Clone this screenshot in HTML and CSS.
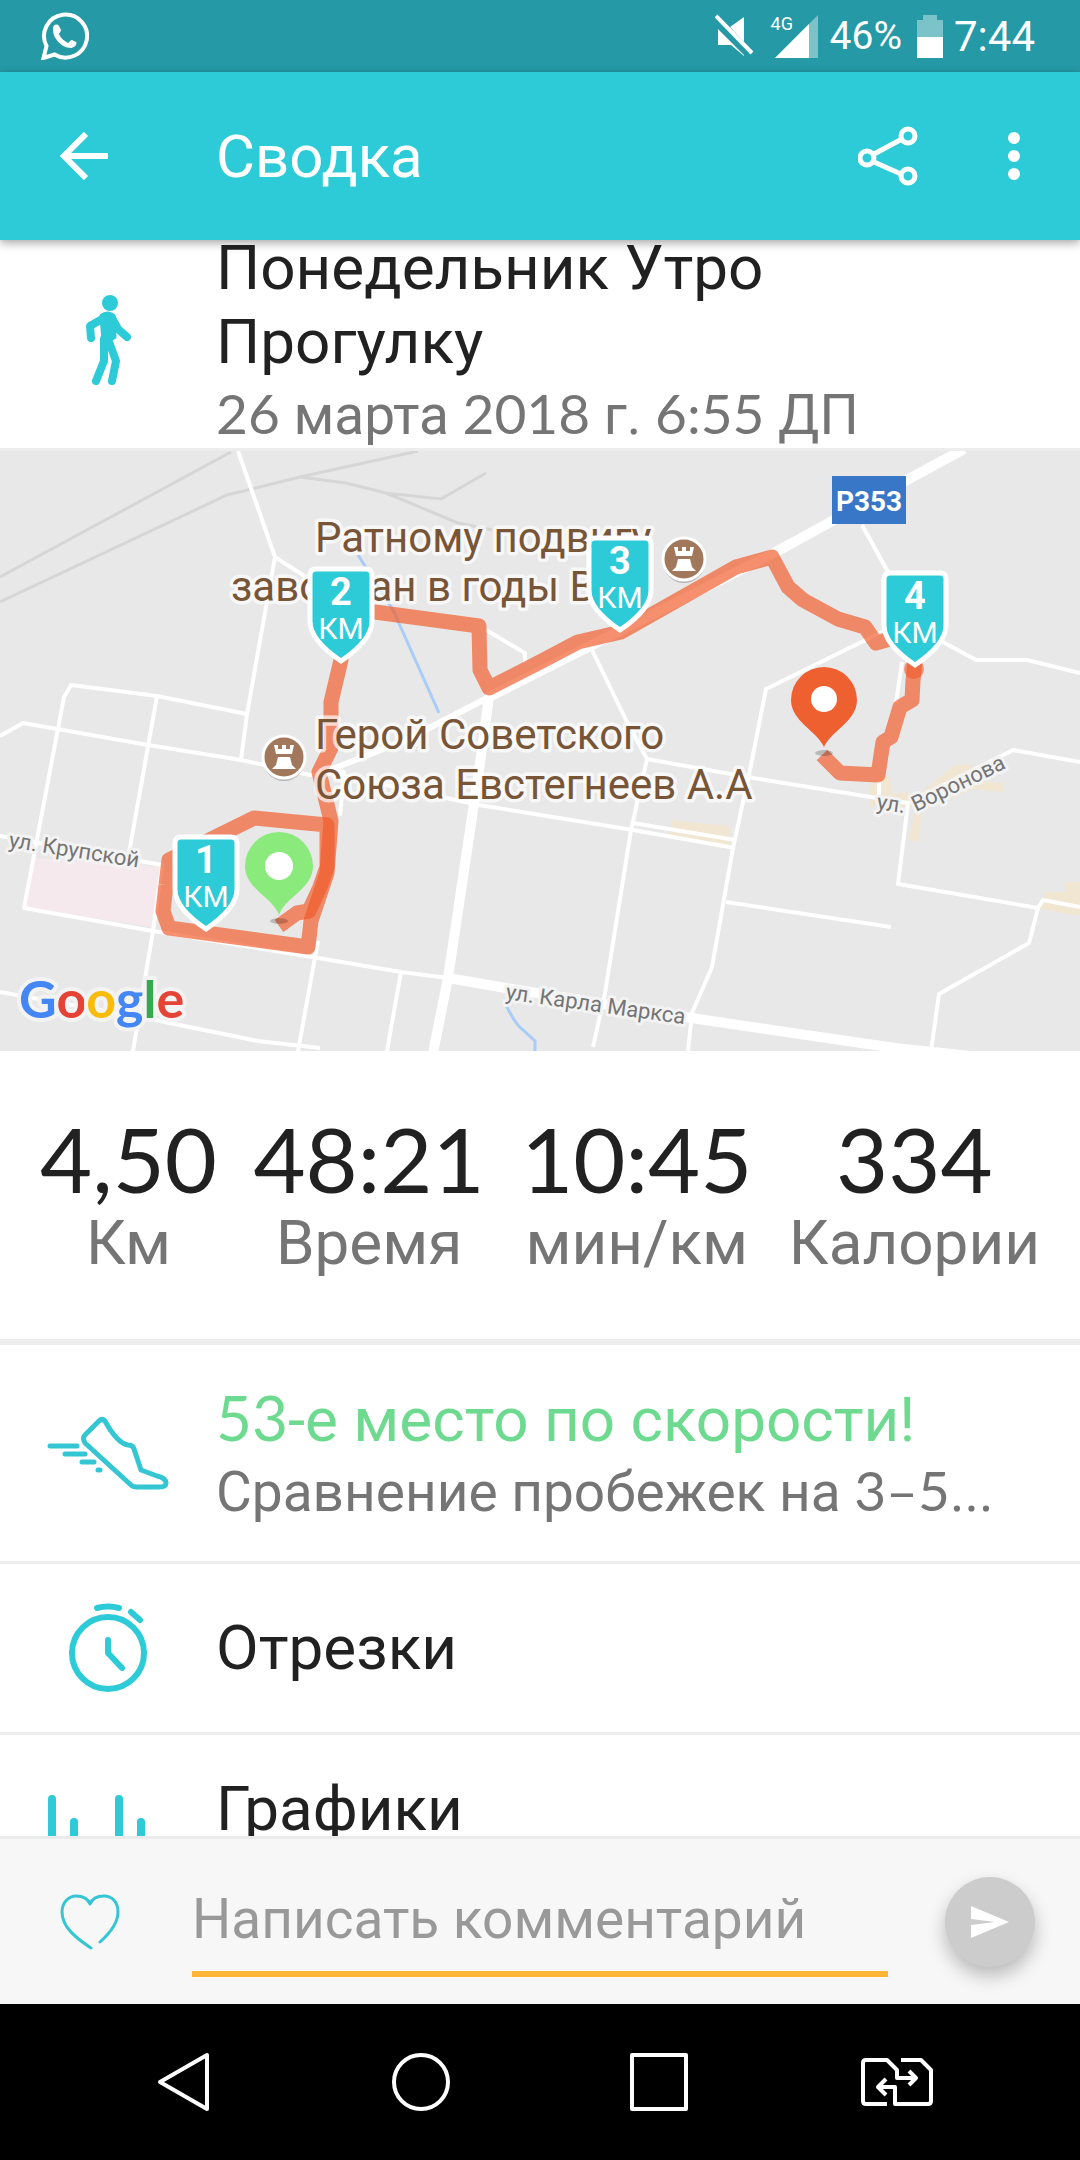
FILE: index.html
```html
<!DOCTYPE html>
<html lang="ru">
<head>
    <meta charset="UTF-8">
    <meta name="viewport" content="width=device-width, initial-scale=1.0">
    <title>Сводка</title>
    <link rel="stylesheet" href="styles.css">
</head>
<body>

<div class="status-bar">
    <svg class="status-chat" width="48" height="48" viewBox="0 0 48 48">
        <path d="M2.500 46 L5.500 34 A21.500 21.500 0 1 1 13.500 42.500 Z" fill="none" stroke="#fff" stroke-width="4"/>
        <path d="M12 16 C12 13 16 11 18 14 L20 18 C20 20 18 21 18 22 C20 27 24 29 27 31 C28 31 29 28 31 28 L35 30 C37 32 33 36 30 36 C20 36 11 25 12 16 Z" fill="#fff"/>
    </svg>
    <svg width="40" height="44" viewBox="0 0 40 44">
        <path d="M3 15 L17 29 L29 41 L29 42 L16 31 L3 31 Z M15 13 L29 3 V28 Z" fill="#fff"/>
        <path d="M1 2 L37 39" stroke="#fff" stroke-width="4"/>
    </svg>
    <div class="signal">
        <span class="signal-type">4G</span>
        <svg width="43" height="43" viewBox="0 0 43 43">
            <path d="M0 43 L43 0 V43 Z" fill="#7cc2c9"/>
            <path d="M0 43 L34 9 V43 Z" fill="#fff"/>
        </svg>
    </div>
    <span class="battery-level">46%</span>
    <svg class="battery" width="26" height="43" viewBox="0 0 26 43">
        <path d="M0 5 H6 V0 H20 V5 H26 V23 H0 Z" fill="#7cc2c9"/>
        <path d="M0 22 H26 V43 H0 Z" fill="#fff"/>
    </svg>
    <span class="clock">7:44</span>
</div>

<header class="app-bar">
    <button class="icon-button" aria-label="Назад">
        <svg width="48" height="48" viewBox="0 0 48 48">
            <path d="M26 2 L4 24 L26 46 M4 24 H48" fill="none" stroke="#fff" stroke-width="6"/>
        </svg>
    </button>
    <h1>Сводка</h1>
    <button class="icon-button" aria-label="Поделиться">
        <svg width="60" height="60" viewBox="0 0 60 60">
            <path d="M16 28 L44 13 M16 36 L43 48" stroke="#fff" stroke-width="5"/>
            <g fill="none" stroke="#fff" stroke-width="5">
                <circle cx="9" cy="32" r="7"/>
                <circle cx="50" cy="10" r="7"/>
                <circle cx="50" cy="50" r="7"/>
            </g>
        </svg>
    </button>
    <button class="icon-button" aria-label="Ещё">
        <svg width="12" height="48" viewBox="0 0 12 48" fill="#fff">
            <circle cx="6" cy="6" r="6"/>
            <circle cx="6" cy="24" r="6"/>
            <circle cx="6" cy="42" r="6"/>
        </svg>
    </button>
</header>

<main>
    <section class="row activity">
        <div class="row-icon">
            <svg width="46" height="90" viewBox="0 0 46 90" fill="none" stroke="#2dcad7" stroke-linecap="round" stroke-linejoin="round">
                <circle cx="25" cy="8" r="8" fill="#2dcad7" stroke="none"/>
                <path d="M17 21 Q22 17 28 21 L29 42 L19 46 Z" fill="#2dcad7" stroke-width="5"/>
                <path d="M19 23 L5 31 L6 43 M27 23 L33 34 L42 42" stroke-width="8"/>
                <path d="M19 44 L19 66 L11 86 M23 44 L31 66 L27 86" stroke-width="8"/>
            </svg>
        </div>
        <div class="row-text">
            <h2>Понедельник Утро Прогулку</h2>
            <p><span class="num">26</span> марта <span class="num">2018</span> г. <span class="num">6:55</span> ДП</p>
        </div>
    </section>

    <svg class="map" viewBox="0 0 1080 600" role="img" aria-label="Маршрут">
        <defs>
            <path id="shield" d="M-25 -92 H25 Q31 -92 31 -86 V-40 C31 -22 12 -8 0 0 C-12 -8 -31 -22 -31 -40 V-86 Q-31 -92 -25 -92 Z"/>
            <g id="castle">
                <circle cy="3" r="21" fill="#b5b5b5"/>
                <circle r="21" fill="#a1785c" stroke="#fff" stroke-width="3"/>
                <path d="M-10 -12 H-6 V-8 H-2 V-12 H2 V-8 H6 V-12 H10 L8 -3 H-8 Z M-6 0 H6 L8 8 L12 12 H-12 L-8 8 Z" fill="#fff"/>
            </g>
        </defs>
        <rect width="1080" height="600" fill="#e8e8e8"/>

        <!-- districts -->
        <path d="M35 407 L162 416 L152 476 L26 456 Z" fill="#f6e9ee"/>
        <g fill="#f1e6d2">
            <path d="M672 369 L729 375 V396 L669 386 Z"/>
            <path d="M870 335 L882 326 L890 326 L892 342 L910 342 L912 356 L870 356 Z"/>
            <path d="M920 342 L955 314 H972 V329 L1004 332 V341 L972 338 L922 361 L919 391 L908 389 Z"/>
            <path d="M1045 441 H1065 V431 H1080 V465 L1040 458 Z"/>
        </g>

        <!-- railways -->
        <g fill="none" stroke="#d6d6d6" stroke-width="3">
            <path d="M0 126 L231 1 M0 151 L227 44 L300 26 L418 0"/>
            <path d="M300 26 L346 32 L386 42 L441 48 L486 22 M386 42 L458 72 L492 79"/>
        </g>

        <!-- streets -->
        <g fill="none" stroke="#fff" stroke-width="4" stroke-linejoin="round">
            <path d="M238 0 L275 106 L312 130 M275 106 L266 156 L247 263 L241 309"/>
            <path d="M0 285 L23 272 L148 294 L241 309 L310 324 L345 321"/>
            <path d="M247 263 L157 245 L71 234 L64 246 L24 457 L153 480 L312 506 L401 521 L448 527"/>
            <path d="M157 245 L129 402 M0 385 L162 414 L153 480 L133 600"/>
            <path d="M0 541 L155 569 L258 590 L320 597"/>
            <path d="M318 490 L298 600 M401 521 L387 600"/>
            <path d="M486 179 L525 202 V212"/>
            <path d="M330 319 L406 289 L489 246" stroke-width="6"/>
            <path d="M330 319 L344 321 L340 365 M340 324 L479 354 L633 379 L735 397 M633 372 L735 389"/>
            <path d="M592 199 L626 269 L647 308 L631 379 L605 542 L593 596"/>
            <path d="M647 308 L747 326 L908 352"/>
            <path d="M890 177 L766 238 L750 319 L733 397 L712 516 L692 562 L688 600"/>
            <path d="M862 74 L888 121 M943 191 L976 209 H1027 L1080 222"/>
            <path d="M902 211 L896 252 M879 330 V346"/>
            <path d="M1080 311 L1013 299 L908 352 L898 433 L1038 457 L1043 449 L1080 456"/>
            <path d="M1038 457 L1029 492 L939 543 L931 600 M726 451 L891 476"/>
        </g>
        <g fill="none" stroke="#fff" stroke-width="10" stroke-linejoin="round">
            <path d="M964 -2 L907 29 L774 102 L592 194 L489 246 L479 319 L448 527 L433 602"/>
            <path d="M448 527 L506 537 L691 567 L895 597 L970 605"/>
        </g>
        <g fill="none" stroke="#a9ccf8" stroke-width="3">
            <path d="M358 104 L393 159 L439 262"/>
            <path d="M506 554 Q515 573 523 579 L535 590 V600"/>
        </g>

        <!-- route -->
        <g class="route">
            <path d="M279 475 L297 462 L309 460 L320 436 L327 416 L327 374 L254 367 L169 409 L166 434"/>
            <path d="M166 434 L163 460 L169 477 L308 496 L311 470 L327 422 L331 370 L319 321 L331 297 L331 251 L341 209 L341 160 L375 161 L479 175 L480 219 L489 237 L540 211 L578 191 L621 181 L736 116 L772 106 L788 136 L803 149 L838 168 L865 176 L876 192 L900 185"/>
            <path d="M915 210 L913 230 L912 249 L900 256 L891 286 L883 291 L878 324 L840 322 L822 304"/>
        </g>
        <circle cx="914" cy="218" r="10" fill="#f05a28" opacity="0.6"/>

        <!-- places -->
        <g class="place">
            <text x="315" y="101">Ратному подвигу</text>
            <text x="231" y="150">заводчан в годы В</text>
            <text x="315" y="298">Герой Советского</text>
            <text x="315" y="348">Союза Евстегнеев А.А</text>
        </g>
        <g class="street">
            <text transform="translate(8 396) rotate(9)">ул. Крупской</text>
            <text transform="translate(505 548) rotate(8)">ул. Карла Маркса</text>
            <text transform="translate(876 358) rotate(8)">ул.</text>
            <text transform="translate(916 361) rotate(-26)">Воронова</text>
        </g>
        <use href="#castle" x="284" y="306"/>
        <use href="#castle" x="684" y="108"/>
        <rect x="832" y="25" width="74" height="48" fill="#3876c8"/>
        <text class="road-number" x="869" y="60">P353</text>

        <!-- start and finish pins -->
        <ellipse cx="279" cy="470" rx="9" ry="3" fill="#000" opacity="0.2"/>
        <path d="M279 464 C273 446 245 438 245 415 A34 34 0 0 1 313 415 C313 438 285 446 279 464 Z" fill="#8aea7b"/>
        <circle cx="279" cy="415" r="14" fill="#fff"/>
        <ellipse cx="824" cy="302" rx="9" ry="3" fill="#000" opacity="0.2"/>
        <path d="M824 296 C817 280 791 270 791 249 A33 33 0 0 1 857 249 C857 270 831 280 824 296 Z" fill="#ef6030"/>
        <circle cx="824" cy="248" r="13" fill="#fff"/>

        <!-- kilometre marks -->
        <g class="km" transform="translate(206 478)">
            <use href="#shield"/>
            <text class="km-number" y="-56">1</text>
            <text y="-22">КМ</text>
        </g>
        <g class="km" transform="translate(341 210)">
            <use href="#shield"/>
            <text class="km-number" y="-56">2</text>
            <text y="-22">КМ</text>
        </g>
        <g class="km" transform="translate(620 179)">
            <use href="#shield"/>
            <text class="km-number" y="-56">3</text>
            <text y="-22">КМ</text>
        </g>
        <g class="km" transform="translate(915 214)">
            <use href="#shield"/>
            <text class="km-number" y="-56">4</text>
            <text y="-22">КМ</text>
        </g>

        <text class="google" x="19" y="567"><tspan fill="#4486f4">G</tspan><tspan fill="#e54335">o</tspan><tspan fill="#fabc0b">o</tspan><tspan fill="#4486f4">g</tspan><tspan fill="#36a852">l</tspan><tspan fill="#e54335">e</tspan></text>
    </svg>

    <dl class="stats">
        <div class="stat"><dd>4,50</dd><dt>Км</dt></div>
        <div class="stat"><dd>48:21</dd><dt>Время</dt></div>
        <div class="stat"><dd>10:45</dd><dt>мин/км</dt></div>
        <div class="stat"><dd>334</dd><dt>Калории</dt></div>
    </dl>

    <a href="#" class="row">
        <div class="row-icon">
            <svg width="122" height="74" viewBox="0 0 122 74" fill="none" stroke="#35c6d4" stroke-width="5" stroke-linecap="round" stroke-linejoin="round">
                <path d="M58 5 Q55 2 52 5 L38 19 Q35 22 38 27 L84 69 Q86 71 90 71 H112 Q119 71 119 67 Q119 62 110 60 L94 54 L87 33 Q86 29 81 29 Q70 27 58 5 Z"/>
                <path d="M3 30 H30 M18 38 H38 M35 46 H47 M51 54 H53"/>
            </svg>
        </div>
        <div class="row-text">
            <h3 class="record"><span class="num">53</span>-е место по скорости!</h3>
            <p>Сравнение пробежек на <span class="num">3–5</span>...</p>
        </div>
    </a>

    <a href="#" class="row row-short">
        <div class="row-icon">
            <svg width="78" height="90" viewBox="0 0 78 90" fill="none" stroke="#2dcad7" stroke-width="6" stroke-linecap="round">
                <circle cx="39" cy="50" r="36"/>
                <path d="M28 5 Q39 2 50 5 M62 9 L71 17"/>
                <path d="M39 37 V50 L53 65" stroke-linejoin="round"/>
            </svg>
        </div>
        <div class="row-text">
            <h3>Отрезки</h3>
        </div>
    </a>

    <a href="#" class="row row-top">
        <div class="row-icon">
            <svg width="120" height="96" viewBox="0 0 120 96" stroke="#2dcad7" stroke-width="8" stroke-linecap="round">
                <path d="M4 4 V92 M26 27 V92 M49 60 V92 M71 4 V92 M93 27 V92 M116 60 V92"/>
            </svg>
        </div>
        <div class="row-text">
            <h3>Графики</h3>
        </div>
    </a>
</main>

<form class="comment-bar">
    <button type="button" class="icon-button" aria-label="Нравится">
        <svg width="60" height="56" viewBox="0 0 60 56" fill="none" stroke="#35c6d4" stroke-width="3" stroke-linecap="round" stroke-linejoin="round">
            <path d="M31 54 C16 44 2 33 2 18 C2 8 9 2 16 2 C23 2 28 5 30 10 C32 5 37 2 44 2 C52 2 58 8 58 18 C58 30 49 40 40 48"/>
        </svg>
    </button>
    <input type="text" placeholder="Написать комментарий" aria-label="Написать комментарий">
    <button type="button" class="send" aria-label="Отправить">
        <svg width="38" height="32" viewBox="0 0 38 32" fill="#fff">
            <path d="M0 0 L38 16 L0 32 V19 L24 16 L0 13 Z"/>
        </svg>
    </button>
</form>

<nav class="nav-bar">
    <button aria-label="Назад">
        <svg width="58" height="60" viewBox="0 0 58 60"><path d="M53 3 V57 L6 30 Z"/></svg>
    </button>
    <button aria-label="Домой">
        <svg width="60" height="60" viewBox="0 0 60 60"><circle cx="30" cy="30" r="27"/></svg>
    </button>
    <button aria-label="Недавние">
        <svg width="60" height="60" viewBox="0 0 60 60"><rect x="3" y="3" width="54" height="54"/></svg>
    </button>
    <button aria-label="Сменить SIM">
        <svg width="72" height="48" viewBox="0 0 72 48">
            <path d="M26 46 H5 Q2 46 2 43 V5 Q2 2 5 2 H26 L36 12 V20 H54"/>
            <path d="M40 2 H60 L70 12 V43 Q70 46 67 46 H34 V29 H18"/>
            <path d="M48 13 L55 20 L48 27 M25 21 L17 29 L25 37"/>
        </svg>
    </button>
</nav>

</body>
</html>
```
FILE: styles.css
```css
* {
    box-sizing: border-box;
    margin: 0;
    padding: 0;
}

body {
    display: flex;
    flex-direction: column;
    height: 100vh;
    overflow: hidden;
    font-family: Roboto, sans-serif;
    font-size: 55px;
    color: #212121;
    background-color: #fff;
}

svg {
    display: block;
    flex-shrink: 0;
}

button {
    border: none;
    background: none;
    cursor: pointer;
}

.num {
    font-family: Lato, sans-serif;
}

/* status bar */
.status-bar {
    display: flex;
    align-items: center;
    flex-shrink: 0;
    height: 72px;
    padding: 0 45px 0 41px;
    background-color: #2599a6;
    color: #fff;
}

.status-chat {
    margin-right: auto;
}

.signal {
    display: flex;
    position: relative;
    margin: 0 12px 0 20px;
}

.signal-type {
    position: absolute;
    top: 0;
    left: -4px;
    font-size: 18px;
    line-height: 18px;
}

.battery-level {
    font-size: 39px;
}

.battery {
    margin: 0 11px 0 15px;
}

.clock {
    font-size: 42px;
}

/* app bar */
.app-bar {
    display: flex;
    align-items: center;
    flex-shrink: 0;
    height: 168px;
    padding: 0 30px;
    background-color: #2dcad7;
    color: #fff;
    box-shadow: 0 3px 9px rgba(0, 0, 0, 0.35);
    z-index: 1;
}

.app-bar h1 {
    flex: 1;
    margin-left: 78px;
    font-size: 60px;
    font-weight: 400;
}

.icon-button {
    padding: 30px;
}

.app-bar .icon-button:last-child {
    margin-left: 30px;
}

/* rows */
main {
    flex: 1;
    min-height: 0;
    overflow: hidden;
}

.row {
    display: flex;
    align-items: center;
    height: 219px;
    border-bottom: 3px solid #ededed;
    color: #212121;
    text-decoration: none;
}

.row-short {
    height: 171px;
}

.row-icon {
    display: flex;
    justify-content: center;
    flex-shrink: 0;
    width: 216px;
}

.row-text {
    flex: 1;
    min-width: 0;
}

.row h3 {
    font-size: 62px;
    font-weight: 400;
    line-height: 72px;
}

.row p {
    font-size: 55px;
    line-height: 68px;
    color: #757575;
}

.row .record {
    color: #6dda90;
}

.row-top .row-text {
    align-self: flex-start;
    padding-top: 38px;
}

/* the list is scrolled a little under the app bar */
.activity {
    margin-top: -8px;
}

.activity .row-text {
    padding-right: 200px;
}

.activity h2 {
    font-size: 62px;
    font-weight: 400;
    line-height: 74px;
}

/* map */
.map {
    width: 100%;
}

.route path {
    fill: none;
    stroke: #f05a28;
    stroke-width: 15px;
    stroke-linejoin: round;
    opacity: 0.68;
}

.place {
    font-size: 42px;
    fill: #785536;
    stroke: rgba(255, 255, 255, 0.7);
    stroke-width: 7px;
    stroke-linejoin: round;
    paint-order: stroke;
}

.street {
    font-size: 22px;
    fill: #757575;
    stroke: #f3f3f3;
    stroke-width: 6px;
    stroke-linejoin: round;
    paint-order: stroke;
}

.road-number {
    font-size: 28px;
    font-weight: 700;
    fill: #fff;
    text-anchor: middle;
}

.km use {
    fill: #2dcad7;
    stroke: #fff;
    stroke-width: 5px;
}

.km text {
    font-size: 30px;
    fill: #fff;
    text-anchor: middle;
}

.km .km-number {
    font-size: 38px;
    font-weight: 700;
}

.google {
    font-family: Lato, sans-serif;
    font-size: 52px;
    font-weight: 700;
    stroke: #f3f3f3;
    stroke-width: 8px;
    stroke-linejoin: round;
    paint-order: stroke;
}

/* stats */
.stats {
    display: flex;
    justify-content: space-between;
    height: 294px;
    padding: 53px 40px 0;
    border-bottom: 6px solid #ededed;
    text-align: center;
}

.stat dd {
    font-family: Lato, sans-serif;
    font-size: 90px;
    line-height: 108px;
}

.stat dt {
    font-size: 62px;
    line-height: 62px;
    color: #757575;
}

/* comment */
.comment-bar {
    display: flex;
    align-items: center;
    flex-shrink: 0;
    height: 168px;
    padding: 0 45px 0 30px;
    border-top: 3px solid #ebebeb;
    background-color: #f7f7f7;
}

.comment-bar input {
    flex: 1;
    min-width: 0;
    height: 110px;
    margin: 0 57px 0 42px;
    border: none;
    border-bottom: 6px solid #ffb636;
    outline: none;
    background: none;
    font: inherit;
    color: #212121;
}

.comment-bar input::placeholder {
    color: #999;
}

.send {
    display: flex;
    align-items: center;
    justify-content: center;
    width: 90px;
    height: 90px;
    border-radius: 50%;
    background-color: #ccc;
    box-shadow: 0 9px 18px rgba(0, 0, 0, 0.25);
}

/* navigation */
.nav-bar {
    display: flex;
    flex-shrink: 0;
    height: 156px;
    padding: 0 64px;
    background-color: #000;
}

.nav-bar button {
    display: flex;
    flex: 1;
    align-items: center;
    justify-content: center;
}

.nav-bar svg {
    fill: none;
    stroke: #fff;
    stroke-width: 4px;
    stroke-linejoin: round;
}
```
